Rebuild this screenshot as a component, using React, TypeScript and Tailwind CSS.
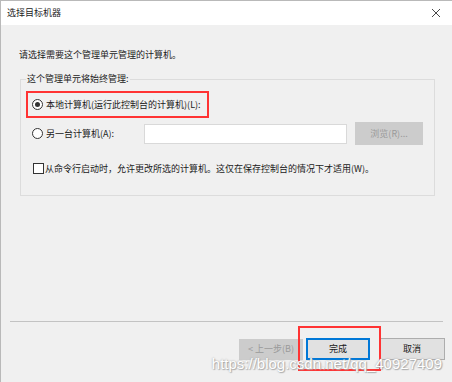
import React from "react";

const font = { fontFamily: '"Noto Sans CJK SC", "Noto Sans", sans-serif' };

const Radio = ({ checked }: { checked?: boolean }) => (
  <span className="w-[11px] h-[11px] rounded-full border border-[#333] bg-white flex items-center justify-center shrink-0">
    {checked && <span className="w-[5px] h-[5px] rounded-full bg-[#333]" />}
  </span>
);

export default function App() {
  return (
    <div
      className="w-[452px] h-[382px] bg-[#f0f0f0] flex flex-col border-l border-t border-[#b9b9b9] text-[9px] text-[#1a1a1a] relative overflow-hidden"
      style={font}
    >
      {/* title bar */}
      <div className="h-[24px] bg-white flex items-center justify-between pl-[6px] pr-[11px] shrink-0">
        <span className="text-[9px] text-[#222]">选择目标机器</span>
        <svg width="10" height="10" viewBox="0 0 10 10">
          <path d="M1 1 L9 9 M9 1 L1 9" stroke="#333" strokeWidth="0.9" fill="none" />
        </svg>
      </div>

      <div className="flex-1 flex flex-col">
        <div className="pl-[18px] pt-[24px] leading-[12px]">请选择需要这个管理单元管理的计算机。</div>

        <fieldset className="mx-[19px] mt-[12px] h-[123px] border border-[#dcdcdc] pl-[5px] pr-[11px]">
          <legend className="px-[1px] text-[9px] leading-[12px] text-[#222]">这个管理单元将始终管理:</legend>

          <div className="mt-[6px] w-[183px] h-[27px] border-2 border-[#ff3333] flex items-center pl-[4px] gap-[3px]">
            <Radio checked />
            <span>本地计算机(运行此控制台的计算机)(L):</span>
          </div>

          <div className="mt-[4px] flex items-center h-[23px]">
            <div className="flex items-center gap-[3px] pl-[6px] w-[118px]">
              <Radio />
              <span>另一台计算机(A):</span>
            </div>
            <div className="w-[203px] h-[20px] bg-white border border-[#d9d9d9]" />
            <div className="ml-[8px] w-[68px] h-[23px] bg-[#cccccc] flex items-center justify-center text-[#9a9a9a]">
              浏览(R)...
            </div>
          </div>

          <div className="mt-[17px] flex items-center pl-[7px] gap-[1px]">
            <span className="w-[11px] h-[11px] border border-[#333] bg-white shrink-0" />
            <span>从命令行启动时，允许更改所选的计算机。这仅在保存控制台的情况下才适用(W)。</span>
          </div>
        </fieldset>

        <div className="mt-auto mx-[9px] h-px bg-[#c3c3c3]" />

        <div className="flex justify-end items-center pr-[7px] pt-[16px] pb-[22px]">
          <div className="w-[64px] h-[21px] bg-[#cccccc] flex items-center justify-center text-[#9a9a9a]">
            &lt; 上一步(B)
          </div>
          <div className="relative ml-[3px]">
            <div className="w-[64px] h-[22px] bg-[#e1e1e1] border-2 border-[#0078d7] flex items-center justify-center">
              完成
            </div>
            <div className="absolute -left-[8px] -top-[12px] w-[83px] h-[45px] border-2 border-[#ff3333]" />
          </div>
          <div className="ml-[9px] w-[66px] h-[22px] bg-[#e1e1e1] border border-[#adadad] flex items-center justify-center">
            取消
          </div>
        </div>
      </div>

      <div
        className="absolute right-[10px] bottom-[9px] text-[15px] leading-[18px] text-white"
        style={{ fontFamily: '"Liberation Sans", Arial, sans-serif', textShadow: "0 0 2px #9a9a9a, 1px 1px 1px #b0b0b0" }}
      >
        https://blog.csdn.net/qq_40927409
      </div>
    </div>
  );
}
